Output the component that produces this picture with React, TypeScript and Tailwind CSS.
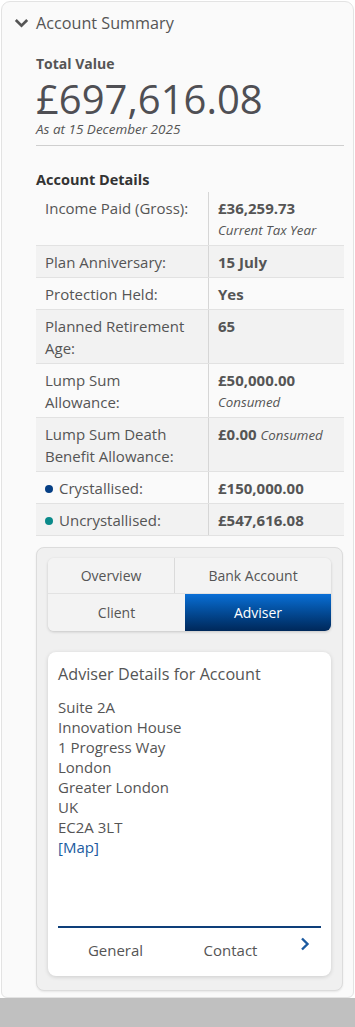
import React from 'react';

type Row = {
    label: React.ReactNode;
    value: React.ReactNode;
};

const dot = (color: string) => (
    <span className={`inline-block w-[8px] h-[8px] rounded-full mr-[6px] align-[1px] ${color}`}></span>
);

const rows: Row[] = [
    {
        label: 'Income Paid (Gross):',
        value: (
            <>
                <div className="font-bold">£36,259.73</div>
                <div className="italic text-[13.3px]">Current Tax Year</div>
            </>
        ),
    },
    { label: 'Plan Anniversary:', value: <span className="font-bold">15 July</span> },
    { label: 'Protection Held:', value: <span className="font-bold">Yes</span> },
    { label: 'Planned Retirement Age:', value: <span className="font-bold">65</span> },
    {
        label: (
            <>
                Lump Sum
                <br />
                Allowance:
            </>
        ),
        value: (
            <>
                <div className="font-bold">£50,000.00</div>
                <div className="italic text-[13.3px]">Consumed</div>
            </>
        ),
    },
    {
        label: (
            <>
                Lump Sum Death
                <br />
                Benefit Allowance:
            </>
        ),
        value: (
            <>
                <span className="font-bold">£0.00</span> <span className="italic text-[13.3px]">Consumed</span>
            </>
        ),
    },
    {
        label: (
            <>
                {dot('bg-[#063f85]')}
                Crystallised:
            </>
        ),
        value: <span className="font-bold">£150,000.00</span>,
    },
    {
        label: (
            <>
                {dot('bg-[#0a8a8a]')}
                Uncrystallised:
            </>
        ),
        value: <span className="font-bold">£547,616.08</span>,
    },
];

const address = ['Suite 2A', 'Innovation House', '1 Progress Way', 'London', 'Greater London', 'UK', 'EC2A 3LT'];

const App: React.FC = () => {
    return (
        <div className="w-[355px] bg-white text-[#555]" style={{ fontFamily: '"Open Sans", "Liberation Sans", sans-serif' }}>
            <div className="pt-[1px] px-[1px]">
                <div className="bg-[#fafafa] border border-[#e3e3e3] rounded-t-[9px] rounded-b-[6px] pb-[6px]">
                    {/* Header */}
                    <div className="flex items-center pt-[9px] pl-[12px]">
                        <svg className="w-[15px] h-[10px] mr-[7px]" viewBox="0 0 15 10" fill="none">
                            <path d="M1.8 2l5.7 5.6 5.7-5.6" stroke="#555" strokeWidth="2.7" />
                        </svg>
                        <span className="text-[16.2px] leading-[24px]">Account Summary</span>
                    </div>

                    <div className="pl-[34px] pr-[9px]">
                        {/* Total value */}
                        <div className="mt-[19px] text-[14px] leading-[20px] font-bold">Total Value</div>
                        <div className="mt-[5px] text-[40px] leading-[40px] text-[#4f4f54]">£697,616.08</div>
                        <div className="mt-[1px] text-[13.5px] leading-[18px] italic">As at 15 December 2025</div>
                        <div className="mt-[7px] border-t border-[#cfcfcf]"></div>

                        {/* Account details */}
                        <div className="mt-[24px] text-[14.5px] leading-[20px] font-bold text-[#333]">Account Details</div>
                        <div className="mt-[2px] text-[15px] leading-[22px]">
                            {rows.map((row, i) => (
                                <div
                                    key={i}
                                    className={`flex border-b border-[#e2e2e2] ${i % 2 === 1 ? 'bg-[#f2f2f2]' : ''}`}
                                >
                                    <div className="w-[172px] pl-[9px] pr-[8px] pt-[5px] pb-[4px]">{row.label}</div>
                                    <div className="flex-1 border-l border-[#d6d6d6] pl-[9px] pt-[5px] pb-[4px]">{row.value}</div>
                                </div>
                            ))}
                        </div>

                        {/* Tabs panel */}
                        <div className="mt-[11px] mr-[1px] bg-[#f0f0f0] border border-[#dcdcdc] rounded-[8px] pt-[10px] pb-[14px] px-[11px] shadow-[0_1px_2px_rgba(0,0,0,0.08)]">
                            <div className="rounded-[6px] overflow-hidden shadow-[0_1px_3px_rgba(0,0,0,0.18)] text-[14px]">
                                <div className="flex h-[36px] bg-[#f3f3f3] border-b border-[#e2e2e2]">
                                    <div className="w-[127px] flex items-center justify-center border-r border-[#dadada]">Overview</div>
                                    <div className="flex-1 flex items-center justify-center">Bank Account</div>
                                </div>
                                <div className="flex h-[37px] bg-[#f3f3f3]">
                                    <div className="w-[137px] flex items-center justify-center">Client</div>
                                    <div className="flex-1 flex items-center justify-center text-white bg-gradient-to-b from-[#0a6fd6] to-[#00285a]">
                                        Adviser
                                    </div>
                                </div>
                            </div>

                            {/* Adviser card */}
                            <div className="mt-[21px] h-[324px] bg-white rounded-[8px] shadow-[0_1px_4px_rgba(0,0,0,0.15)] px-[10px] flex flex-col">
                                <div className="pt-[10px] text-[16.2px] leading-[24px]">Adviser Details for Account</div>
                                <div className="mt-[11px] text-[15px] leading-[20px]">
                                    {address.map((line) => (
                                        <div key={line}>{line}</div>
                                    ))}
                                    <div className="text-[#1b5aa0]">[Map]</div>
                                </div>
                                <div className="mt-auto border-t-2 border-[#0e3f7a]"></div>
                                <div className="flex h-[48px] pb-[3px] text-[15px]">
                                    <div className="w-[115px] flex items-center justify-center">General</div>
                                    <div className="w-[115px] flex items-center justify-center">Contact</div>
                                    <div className="flex-1 flex justify-center pt-[9px]">
                                        <svg className="w-[10px] h-[14px]" viewBox="0 0 10 14" fill="none">
                                            <path d="M2 1.5l5.5 5.5-5.5 5.5" stroke="#1b5aa0" strokeWidth="2.4" />
                                        </svg>
                                    </div>
                                </div>
                            </div>
                        </div>
                    </div>
                </div>
            </div>
            <div className="h-[29px] bg-[#c0c0c0]"></div>
        </div>
    );
};

export default App;
